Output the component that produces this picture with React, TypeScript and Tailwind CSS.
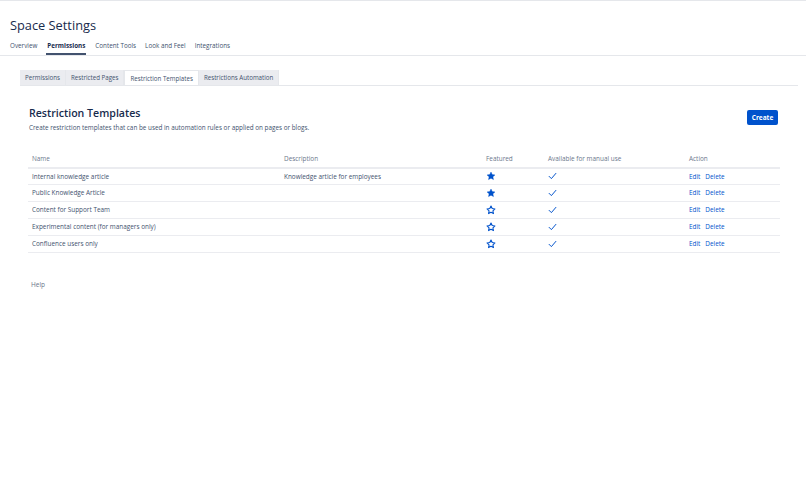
import React from 'react';

type Row = { name: string; description: string; featured: boolean };

const rows: Row[] = [
  { name: 'Internal knowledge article', description: 'Knowledge article for employees', featured: true },
  { name: 'Public Knowledge Article', description: '', featured: true },
  { name: 'Content for Support Team', description: '', featured: false },
  { name: 'Experimental content (for managers only)', description: '', featured: false },
  { name: 'Confluence users only', description: '', featured: false },
];

const Star: React.FC<{ filled: boolean }> = ({ filled }) => (
  <svg width="10" height="10" viewBox="0 0 24 24" className="block">
    <path
      d="M12 2.5l2.9 6.1 6.6.8-4.9 4.6 1.3 6.6L12 17.3l-5.9 3.3 1.3-6.6-4.9-4.6 6.6-.8z"
      fill={filled ? '#0052cc' : 'none'}
      stroke="#0052cc"
      strokeWidth={filled ? 1 : 2.6}
      strokeLinejoin="round"
    />
  </svg>
);

const Check: React.FC = () => (
  <svg width="9" height="8" viewBox="0 0 24 20" className="block">
    <path d="M3 11l6 6L21 3" fill="none" stroke="#0052cc" strokeWidth="2.6" strokeLinecap="round" strokeLinejoin="round" />
  </svg>
);

export default function App() {
  const mainTabs = ['Overview', 'Permissions', 'Content Tools', 'Look and Feel', 'Integrations'];
  const subTabs = ['Permissions', 'Restricted Pages', 'Restriction Templates', 'Restrictions Automation'];

  return (
    <div className="min-h-screen w-full bg-white border-t border-gray-200 text-[#172b4d]" style={{ fontFamily: '"Open Sans", "Noto Sans", sans-serif' }}>
      {/* Header */}
      <div className="px-[10px] pt-[14px]">
        <h1 className="text-[12.8px] leading-[20px] text-[#172b4d]">Space Settings</h1>
      </div>
      <div className="mt-[5px] flex gap-[9px] px-[10px] border-b border-gray-200">
        {mainTabs.map((t) => (
          <div
            key={t}
            className={
              t === 'Permissions'
                ? 'pb-[3px] pt-[1px] text-[6.3px] font-bold text-[#172b4d] border-b-2 border-[#42526e] px-[1px]'
                : 'pb-[3px] pt-[1px] text-[6.3px] text-[#42526e] border-b-2 border-transparent'
            }
          >
            {t}
          </div>
        ))}
      </div>

      {/* Sub tabs */}
      <div className="mt-[14px] ml-[20px] mr-[8px] flex border-b border-gray-200">
        {subTabs.map((t) => (
          <div
            key={t}
            className={
              t === 'Restriction Templates'
                ? 'px-[5px] h-[15px] flex items-center text-[6.2px] text-[#42526e] bg-white border-x border-t border-gray-200 -mb-px'
                : 'px-[5px] h-[15px] flex items-center text-[6.2px] text-[#42526e] bg-[#ebecf0] border-r border-gray-200'
            }
          >
            {t}
          </div>
        ))}
      </div>

      {/* Content */}
      <div className="px-[28px] pt-[19px]">
        <div className="flex items-start justify-between">
          <div>
            <h2 className="text-[10.6px] leading-[16px] font-semibold text-[#172b4d] pl-[1px]">Restriction Templates</h2>
            <p className="mt-[2px] pl-[1px] text-[6.35px] text-[#42526e]">
              Create restriction templates that can be used in automation rules or applied on pages or blogs.
            </p>
          </div>
          <button className="mt-[5px] h-[15px] w-[31px] rounded-[2px] bg-[#0052cc] text-white text-[6.5px] font-bold">
            Create
          </button>
        </div>

        <table className="mt-[21px] w-[752px] border-collapse text-[6.4px]">
          <thead>
            <tr className="border-b-2 border-[#ebecf0] text-[#6b778c] text-left">
              <th className="font-normal pl-[4px] pb-[3px] w-[256px]">Name</th>
              <th className="font-normal pb-[3px] w-[202px]">Description</th>
              <th className="font-normal pb-[3px] w-[62px]">Featured</th>
              <th className="font-normal pb-[3px] w-[141px]">Available for manual use</th>
              <th className="font-normal pb-[3px]">Action</th>
            </tr>
          </thead>
          <tbody>
            {rows.map((r) => (
              <tr key={r.name} className="border-b border-[#ebecf0] h-[17px] text-[#42526e]">
                <td className="pl-[4px]">{r.name}</td>
                <td>{r.description}</td>
                <td><Star filled={r.featured} /></td>
                <td><Check /></td>
                <td className="text-[#0052cc]">
                  <span>Edit</span>
                  <span className="ml-[5px]">Delete</span>
                </td>
              </tr>
            ))}
          </tbody>
        </table>

        <div className="mt-[27px] pl-[3px] text-[6.5px] text-[#6b778c]">Help</div>
      </div>
    </div>
  );
}
